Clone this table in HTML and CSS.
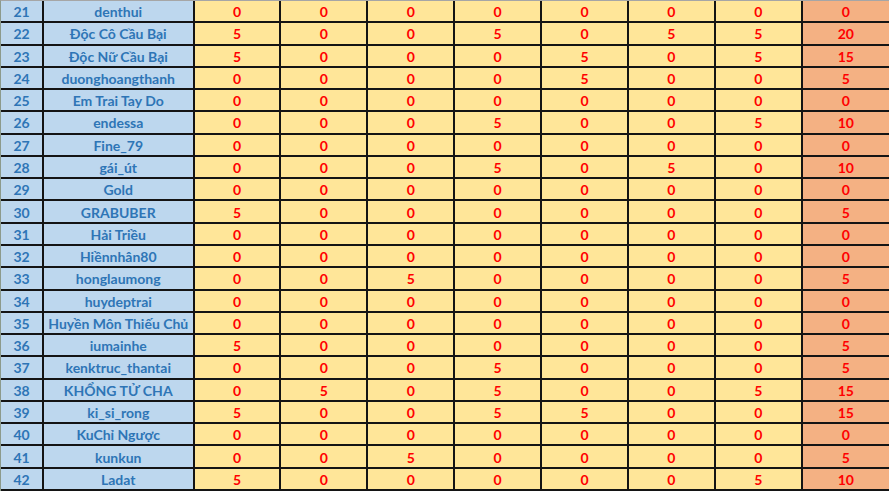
FILE: index.html
```html
<!DOCTYPE html>
<html lang="vi">
<head>
<meta charset="utf-8">
<title>Bảng điểm</title>
<link rel="stylesheet" href="styles.css">
</head>
<body>
<div class="sheet">
<div class="c n">21</div><div class="c name">denthui</div><div class="c v">0</div><div class="c v">0</div><div class="c v">0</div><div class="c v">0</div><div class="c v">0</div><div class="c v">0</div><div class="c v">0</div><div class="c t">0</div>
<div class="c n">22</div><div class="c name">Độc Cô Cầu Bại</div><div class="c v">5</div><div class="c v">0</div><div class="c v">0</div><div class="c v">5</div><div class="c v">0</div><div class="c v">5</div><div class="c v">5</div><div class="c t">20</div>
<div class="c n">23</div><div class="c name">Độc Nữ Cầu Bại</div><div class="c v">5</div><div class="c v">0</div><div class="c v">0</div><div class="c v">0</div><div class="c v">5</div><div class="c v">0</div><div class="c v">5</div><div class="c t">15</div>
<div class="c n">24</div><div class="c name">duonghoangthanh</div><div class="c v">0</div><div class="c v">0</div><div class="c v">0</div><div class="c v">0</div><div class="c v">5</div><div class="c v">0</div><div class="c v">0</div><div class="c t">5</div>
<div class="c n">25</div><div class="c name">Em Trai Tay Do</div><div class="c v">0</div><div class="c v">0</div><div class="c v">0</div><div class="c v">0</div><div class="c v">0</div><div class="c v">0</div><div class="c v">0</div><div class="c t">0</div>
<div class="c n">26</div><div class="c name">endessa</div><div class="c v">0</div><div class="c v">0</div><div class="c v">0</div><div class="c v">5</div><div class="c v">0</div><div class="c v">0</div><div class="c v">5</div><div class="c t">10</div>
<div class="c n">27</div><div class="c name">Fine_79</div><div class="c v">0</div><div class="c v">0</div><div class="c v">0</div><div class="c v">0</div><div class="c v">0</div><div class="c v">0</div><div class="c v">0</div><div class="c t">0</div>
<div class="c n">28</div><div class="c name">gái_út</div><div class="c v">0</div><div class="c v">0</div><div class="c v">0</div><div class="c v">5</div><div class="c v">0</div><div class="c v">5</div><div class="c v">0</div><div class="c t">10</div>
<div class="c n">29</div><div class="c name">Gold</div><div class="c v">0</div><div class="c v">0</div><div class="c v">0</div><div class="c v">0</div><div class="c v">0</div><div class="c v">0</div><div class="c v">0</div><div class="c t">0</div>
<div class="c n">30</div><div class="c name">GRABUBER</div><div class="c v">5</div><div class="c v">0</div><div class="c v">0</div><div class="c v">0</div><div class="c v">0</div><div class="c v">0</div><div class="c v">0</div><div class="c t">5</div>
<div class="c n">31</div><div class="c name">Hải Triều</div><div class="c v">0</div><div class="c v">0</div><div class="c v">0</div><div class="c v">0</div><div class="c v">0</div><div class="c v">0</div><div class="c v">0</div><div class="c t">0</div>
<div class="c n">32</div><div class="c name">Hiềnnhân80</div><div class="c v">0</div><div class="c v">0</div><div class="c v">0</div><div class="c v">0</div><div class="c v">0</div><div class="c v">0</div><div class="c v">0</div><div class="c t">0</div>
<div class="c n">33</div><div class="c name">honglaumong</div><div class="c v">0</div><div class="c v">0</div><div class="c v">5</div><div class="c v">0</div><div class="c v">0</div><div class="c v">0</div><div class="c v">0</div><div class="c t">5</div>
<div class="c n">34</div><div class="c name">huydeptrai</div><div class="c v">0</div><div class="c v">0</div><div class="c v">0</div><div class="c v">0</div><div class="c v">0</div><div class="c v">0</div><div class="c v">0</div><div class="c t">0</div>
<div class="c n">35</div><div class="c name">Huyền Môn Thiếu Chủ</div><div class="c v">0</div><div class="c v">0</div><div class="c v">0</div><div class="c v">0</div><div class="c v">0</div><div class="c v">0</div><div class="c v">0</div><div class="c t">0</div>
<div class="c n">36</div><div class="c name">iumainhe</div><div class="c v">5</div><div class="c v">0</div><div class="c v">0</div><div class="c v">0</div><div class="c v">0</div><div class="c v">0</div><div class="c v">0</div><div class="c t">5</div>
<div class="c n">37</div><div class="c name">kenktruc_thantai</div><div class="c v">0</div><div class="c v">0</div><div class="c v">0</div><div class="c v">5</div><div class="c v">0</div><div class="c v">0</div><div class="c v">0</div><div class="c t">5</div>
<div class="c n">38</div><div class="c name">KHỔNG TỬ CHA</div><div class="c v">0</div><div class="c v">5</div><div class="c v">0</div><div class="c v">5</div><div class="c v">0</div><div class="c v">0</div><div class="c v">5</div><div class="c t">15</div>
<div class="c n">39</div><div class="c name">ki_si_rong</div><div class="c v">5</div><div class="c v">0</div><div class="c v">0</div><div class="c v">5</div><div class="c v">5</div><div class="c v">0</div><div class="c v">0</div><div class="c t">15</div>
<div class="c n">40</div><div class="c name">KuChỉ Ngược</div><div class="c v">0</div><div class="c v">0</div><div class="c v">0</div><div class="c v">0</div><div class="c v">0</div><div class="c v">0</div><div class="c v">0</div><div class="c t">0</div>
<div class="c n">41</div><div class="c name">kunkun</div><div class="c v">0</div><div class="c v">0</div><div class="c v">5</div><div class="c v">0</div><div class="c v">0</div><div class="c v">0</div><div class="c v">0</div><div class="c t">5</div>
<div class="c n">42</div><div class="c name">Ladat</div><div class="c v">5</div><div class="c v">0</div><div class="c v">0</div><div class="c v">0</div><div class="c v">0</div><div class="c v">0</div><div class="c v">5</div><div class="c t">10</div>
</div>
</body>
</html>
```
FILE: styles.css
```css
html, body {
  margin: 0;
  padding: 0;
  background: #ffffff;
}
.sheet {
  box-sizing: border-box;
  width: 889px;
  height: 491px;
  border-top: 1px solid #a6a6a6;
  border-left: 1px solid #8c9a8c;
  padding-bottom: 2px;
  background: #141414;
  display: grid;
  grid-template-columns: 41px 148.5px repeat(7, 1fr) 86.3px;
  grid-template-rows: repeat(22, 1fr);
  gap: 2px;
  font-family: "Lato", "Noto Sans", sans-serif;
  font-weight: 700;
  font-size: 14px;
}
.c {
  display: flex;
  align-items: center;
  justify-content: center;
  padding-top: 1px;
  white-space: nowrap;
  overflow: hidden;
}
.n, .name {
  background: #bdd7ee;
  color: #2e75b6;
}
.v {
  background: #ffe699;
  color: #ff0000;
}
.t {
  background: #f4b183;
  color: #ff0000;
}
```
